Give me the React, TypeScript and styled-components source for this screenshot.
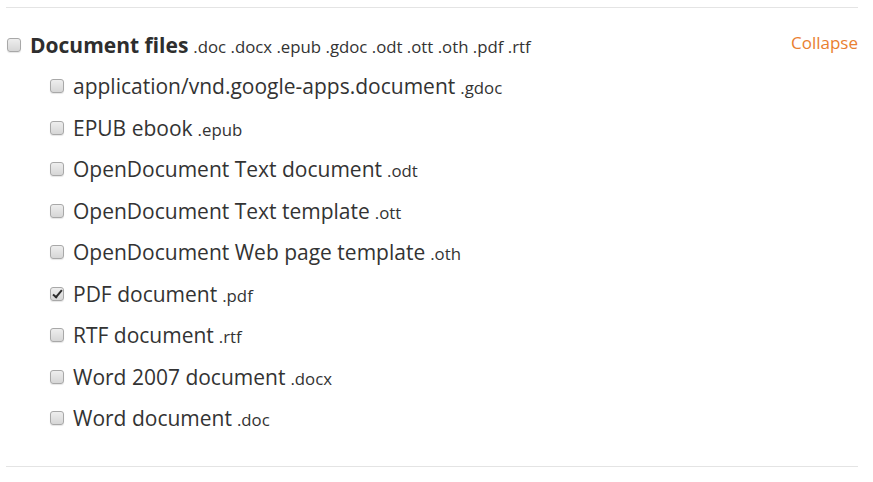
import React, { useState } from 'react';
import styled, { createGlobalStyle } from 'styled-components';

const GlobalStyle = createGlobalStyle`
  body {
    margin: 0;
    background: #fff;
    font-family: 'Open Sans', 'Liberation Sans', sans-serif;
    color: #333;
  }
`;

type FileType = {
  name: string;
  ext: string;
  checked?: boolean;
};

const fileTypes: FileType[] = [
  { name: 'application/vnd.google-apps.document', ext: '.gdoc' },
  { name: 'EPUB ebook', ext: '.epub' },
  { name: 'OpenDocument Text document', ext: '.odt' },
  { name: 'OpenDocument Text template', ext: '.ott' },
  { name: 'OpenDocument Web page template', ext: '.oth' },
  { name: 'PDF document', ext: '.pdf', checked: true },
  { name: 'RTF document', ext: '.rtf' },
  { name: 'Word 2007 document', ext: '.docx' },
  { name: 'Word document', ext: '.doc' },
];

const Section = styled.section`
  margin: 7px 15px 0 6px;
  padding: 16px 0 27px;
  border-top: 1px solid #e4e4e4;
  border-bottom: 1px solid #e4e4e4;
`;

const HeaderRow = styled.div`
  display: flex;
  align-items: center;
  justify-content: space-between;
  height: 41.5px;
`;

const Row = styled.label<{ $indent?: boolean }>`
  display: flex;
  align-items: center;
  gap: 8px;
  height: 41.5px;
  padding-left: ${(p) => (p.$indent ? '44px' : '1px')};
  cursor: pointer;
`;

const Box = styled.input.attrs({ type: 'checkbox' })`
  appearance: none;
  -webkit-appearance: none;
  position: relative;
  margin: 0 1px 0 0;
  width: 14px;
  height: 14px;
  flex: none;
  border: 1px solid #a8a8a8;
  border-radius: 3px;
  background: linear-gradient(#eeeeee, #d6d6d6);
  box-shadow: 0 1px 1px rgba(0, 0, 0, 0.1);
  cursor: pointer;

  &:checked::after {
    content: '';
    position: absolute;
    left: 4px;
    top: 0px;
    width: 3px;
    height: 8px;
    border: solid #2b2b2b;
    border-width: 0 2.5px 2.5px 0;
    transform: rotate(40deg);
  }
`;

const Title = styled.span`
  font-size: 21px;
  font-weight: 700;
  color: #2e2e2e;
`;

const Name = styled.span`
  font-size: 21px;
  color: #333;
`;

const Ext = styled.span`
  font-size: 16.8px;
  color: #333;
  margin-left: 5px;
`;

const Collapse = styled.a`
  font-size: 17px;
  color: #e9802f;
  text-decoration: none;
  margin-top: -4px;
  cursor: pointer;
`;

const List = styled.div`
  display: flex;
  flex-direction: column;
`;

export default function App() {
  const [checked, setChecked] = useState<boolean[]>(fileTypes.map((f) => !!f.checked));
  const [open, setOpen] = useState(true);

  const toggle = (i: number) => {
    setChecked((prev) => prev.map((c, j) => (j === i ? !c : c)));
  };

  const allChecked = checked.every(Boolean);

  return (
    <>
      <GlobalStyle />
      <Section>
        <HeaderRow>
          <Row>
            <Box checked={allChecked} onChange={() => setChecked(checked.map(() => !allChecked))} />
            <span>
              <Title>Document files</Title>
              <Ext>.doc .docx .epub .gdoc .odt .ott .oth .pdf .rtf</Ext>
            </span>
          </Row>
          <Collapse onClick={() => setOpen(!open)}>{open ? 'Collapse' : 'Expand'}</Collapse>
        </HeaderRow>
        {open && (
          <List>
            {fileTypes.map((f, i) => (
              <Row key={f.ext} $indent>
                <Box checked={checked[i]} onChange={() => toggle(i)} />
                <span>
                  <Name>{f.name}</Name>
                  <Ext>{f.ext}</Ext>
                </span>
              </Row>
            ))}
          </List>
        )}
      </Section>
    </>
  );
}
